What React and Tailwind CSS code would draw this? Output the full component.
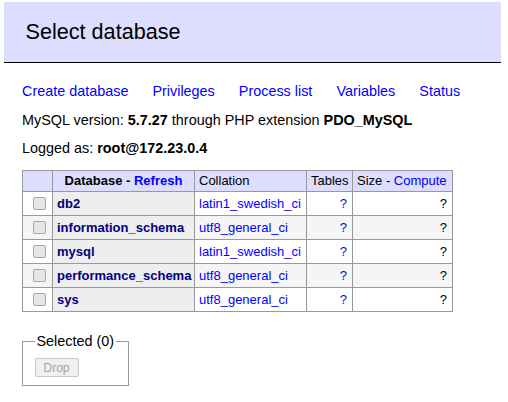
import React from "react";

const rows = [
  { name: "db2", coll: "latin1_swedish_ci" },
  { name: "information_schema", coll: "utf8_general_ci" },
  { name: "mysql", coll: "latin1_swedish_ci" },
  { name: "performance_schema", coll: "utf8_general_ci" },
  { name: "sys", coll: "utf8_general_ci" },
];

function Check() {
  return (
    <span className="block w-[13px] h-[13px] rounded-[2px] border border-[#a6a6a6] bg-[#e6e6e6]" />
  );
}

export default function App() {
  return (
    <div
      className="w-[508px] h-[402px] bg-white text-black pt-[2px] overflow-hidden"
      style={{ fontFamily: '"Liberation Sans", Arial, sans-serif' }}
    >
      <div className="ml-[4px] w-[497px] bg-[#ddf] border-b border-black pt-[16px] pb-[17px] pl-[21.6px]">
        <h2 className="text-[21.6px] leading-[27px] font-normal">Select database</h2>
      </div>
      <div className="pl-[22px] text-[14.4px] leading-[18px]">
        <p className="mt-[19px] whitespace-nowrap">
          <a className="text-[#00f] mr-[20px]">Create database</a>{" "}
          <a className="text-[#00f] mr-[20px]">Privileges</a>{" "}
          <a className="text-[#00f] mr-[20px]">Process list</a>{" "}
          <a className="text-[#00f] mr-[20px]">Variables</a>{" "}
          <a className="text-[#00f] mr-[20px]">Status</a>
        </p>
        <p className="mt-[10.5px]">
          MySQL version: <b>5.7.27</b> through PHP extension <b>PDO_MySQL</b>
        </p>
        <p className="mt-[10.5px]">
          Logged as: <b>root@172.23.0.4</b>
        </p>
        <table className="mt-[13px] table-fixed w-[431px] border-separate border-spacing-0 border-t border-l border-[#999] text-[13px] leading-[16px]">
          <colgroup>
            <col className="w-[30px]" />
            <col className="w-[142px]" />
            <col className="w-[112px]" />
            <col className="w-[46px]" />
            <col className="w-[100px]" />
          </colgroup>
          <thead>
            <tr>
              <th className="h-[21px] p-0 bg-[#ddf] border-r border-b border-[#999]"></th>
              <th className="h-[21px] p-0 bg-[#ddf] border-r border-b border-[#999] text-center font-bold whitespace-nowrap">
                Database - <a className="text-[#00f]">Refresh</a>
              </th>
              <td className="h-[21px] py-0 px-[4px] bg-[#ddf] border-r border-b border-[#999]">Collation</td>
              <td className="h-[21px] py-0 px-[4px] bg-[#ddf] border-r border-b border-[#999]">Tables</td>
              <td className="h-[21px] py-0 px-[4px] bg-[#ddf] border-r border-b border-[#999] whitespace-nowrap">
                Size - <a className="text-[#00f]">Compute</a>
              </td>
            </tr>
          </thead>
          <tbody>
            {rows.map((r, i) => {
              const bg = i % 2 === 1 ? "bg-[#f5f5f5]" : "bg-white";
              return (
                <tr key={r.name} className={bg}>
                  <td className="h-[24px] p-0 pl-[10px] border-r border-b border-[#999] align-middle">
                    <Check />
                  </td>
                  <th className="h-[24px] py-0 px-[4px] bg-[#eee] border-r border-b border-[#999] text-left font-bold whitespace-nowrap">
                    <a className="text-[#000080]">{r.name}</a>
                  </th>
                  <td className="h-[24px] py-0 px-[4px] border-r border-b border-[#999] whitespace-nowrap">
                    <a className="text-[#00f]">{r.coll}</a>
                  </td>
                  <td className="h-[24px] py-0 pl-[4px] pr-[5px] border-r border-b border-[#999] text-right">
                    <a className="text-[#00f]">?</a>
                  </td>
                  <td className="h-[24px] py-0 pl-[4px] pr-[5px] border-r border-b border-[#999] text-right">?</td>
                </tr>
              );
            })}
          </tbody>
        </table>
        <div className="mt-[20px]">
          <fieldset className="inline-block border border-[#999] px-[11.5px] pt-[8px] pb-[8px]">
            <legend className="px-[2px] text-[14.4px] leading-[18px]">Selected (0)</legend>
            <button
              disabled
              className="w-[44px] h-[19px] flex items-center justify-center text-[12px] text-[#a3a3a3] bg-[#f0f0f0] border border-[#c8c8c8] rounded-[2px]"
            >
              Drop
            </button>
          </fieldset>
        </div>
      </div>
    </div>
  );
}
